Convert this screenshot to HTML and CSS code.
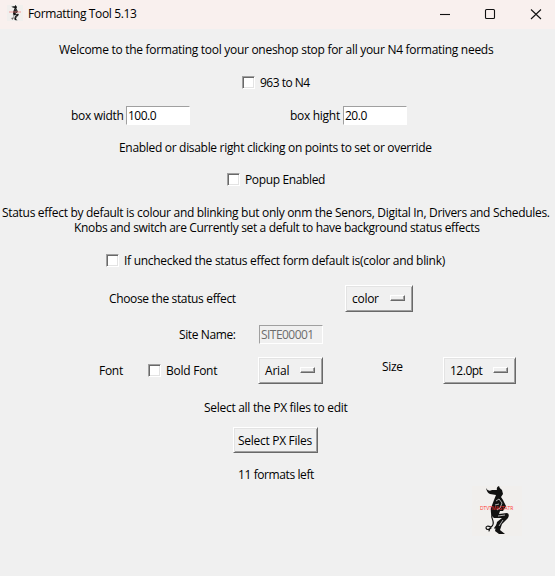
FILE: index.html
```html
<!DOCTYPE html>
<html lang="en">
<head>
<meta charset="utf-8">
<title>Formatting Tool 5.13</title>
<link rel="stylesheet" href="styles.css">
</head>
<body>
<svg class="defs" width="0" height="0" aria-hidden="true">
  <symbol id="imp" viewBox="0 0 50 50">
    <rect width="50" height="50" fill="#f1efed"/>
    <g fill="#111">
      <path d="M14 2Q16 6 20 4L25 4Q24 1 27 0Q27 2 30 4L31 8L29 11L31 14L34 20L31 25L28 25L27 28L35 27Q38 28 36 32L30 38L28 44L33 48H27L23 45L25 36L30 32L22 32Q18 29 19 22L22 14L24 9L18 8Q15 7 14 2Z"/>
    </g>
    <g fill="none" stroke="#111" stroke-linecap="round">
      <path d="M20 27Q19 31 21 35Q22 39 19 41Q14 39 14 42Q15 45 19 42M18 42L17 45" stroke-width="1.2"/>
      <path d="M26 38L23 42" stroke-width="1.6"/>
    </g>
    <path d="M24 15L27 13L30 17L28 22M23 19L27 18M25 24L28 22M26 30L33 29M31 34L27 40" fill="none" stroke="#d8d8d8" stroke-width=".8"/>
  </symbol>
</svg>
<header class="titlebar">
  <svg class="app-icon"><use href="#imp"/><path d="M2 7H14" stroke="#ef7777" stroke-width="1" opacity=".7"/></svg>
  <h1 class="title">Formatting Tool 5.13</h1>
  <svg class="controls" viewBox="0 0 105 28" fill="none" stroke="#111" stroke-width="1.1">
    <path d="M0 13.5H10"/><rect x="45.5" y="8.5" width="9" height="9" rx="1"/><path d="M91 8.5L101 18M101 8.5L91 18"/>
  </svg>
</header>
<main>
  <p class="row welcome"><span>Welcome to the formating tool your oneshop stop for all your N4 formating needs</span></p>
  <label class="row convert"><i class="check"></i><span>963 to N4</span></label>
  <div class="row boxes"><span class="box-w">box width</span><span class="entry entry-w">100.0</span><span class="box-h">box hight</span><span class="entry">20.0</span></div>
  <p class="row enable"><span>Enabled or disable right clicking on points to set or override</span></p>
  <label class="row popup"><i class="check"></i><span>Popup Enabled</span></label>
  <div class="notes"><p class="note-a">Status effect by default is colour and blinking but only onm the Senors, Digital In, Drivers and Schedules.</p><p class="note-b">Knobs and switch are Currently set a defult to have background status effects</p></div>
  <label class="row unchecked"><i class="check"></i><span>If unchecked the status effect form default is(color and blink)</span></label>
  <div class="row effect"><span class="effect-label">Choose the status effect</span><button class="menu color"><span>color</span><i></i></button></div>
  <div class="row site"><span class="site-label">Site Name:</span><span class="entry disabled">SITE00001</span></div>
  <div class="row fonts"><span class="font-label">Font</span><i class="check"></i><span class="bold-label">Bold Font</span><button class="menu arial"><span>Arial</span><i></i></button><span class="size-label">Size</span><button class="menu points"><span>12.0pt</span><i></i></button></div>
  <p class="row files"><span>Select all the PX files to edit</span></p>
  <div class="row action"><button class="select"><span>Select PX Files</span></button></div>
  <p class="row remaining"><span>11 formats left</span></p>
  <div class="brand"><svg class="logo"><use href="#imp"/></svg><span class="logo-text">DTVTMASTATR</span></div>
</main>
</body>
</html>
```
FILE: styles.css
```css
* { box-sizing: border-box; }
body {
  margin: 0;
  width: 555px;
  height: 576px;
  overflow: hidden;
  background: #f0f0f0;
  color: #000;
  font: 12px/15px "Open Sans", "Noto Sans", sans-serif;
  letter-spacing: -.29px;
  white-space: nowrap;
}
p, h1 { margin: 0; }
.defs { position: absolute; }
.titlebar { display: flex; align-items: center; height: 29px; padding-left: 7px; background: #f9f0ee; }
.app-icon { width: 16px; height: 16px; margin-top: -3px; }
.title { width: 160px; margin: -2px 0 0 5px; font-size: 12px; font-weight: 400; letter-spacing: -.35px; }
.controls { width: 105px; height: 28px; margin-left: 252px; }
main { display: flex; flex-direction: column; }
.row { display: flex; align-items: center; flex: none; }
.welcome { height: 41px; padding-left: 59px; }
.convert { height: 25px; padding-left: 242px; letter-spacing: -.5px; }
.boxes { height: 41px; padding-left: 71px; }
.enable { height: 22px; padding-left: 119px; letter-spacing: -.31px; }
.popup { height: 43px; padding-left: 227px; letter-spacing: -.36px; }
.notes { height: 46px; padding-top: 4px; }
.note-a { padding-left: 2px; letter-spacing: -.305px; }
.note-b { padding-left: 74px; letter-spacing: -.345px; }
.unchecked { height: 27px; padding-left: 106px; }
.effect { height: 49px; padding-left: 109px; }
.site { height: 23px; padding-left: 179px; }
.fonts { height: 49px; padding-left: 99px; }
.files { height: 24px; padding-left: 204px; }
.action { height: 42px; padding-left: 233px; }
.remaining { height: 26px; padding-left: 238px; letter-spacing: -.4px; }
.check {
  width: 13px;
  height: 13px;
  margin-right: 5px;
  background: #fff;
  border: 1px solid;
  border-color: #a0a0a0 #fff #fff #a0a0a0;
  box-shadow: inset 1px 1px #696969, inset -1px -1px #e3e3e3;
}
.entry {
  width: 64px;
  height: 19px;
  padding: 1px 0 0 1px;
  background: #fff;
  border: 1px solid;
  border-color: #a0a0a0 #fff #fff #a0a0a0;
}
.boxes .entry { letter-spacing: -.5px; }
.box-w { width: 55px; }
.entry-w { margin-right: 100px; }
.box-h { width: 53px; }
.disabled { background: #f0f0f0; color: #6d6d6d; letter-spacing: -.55px; }
.effect-label { width: 236px; letter-spacing: -.35px; }
.site-label { width: 80px; letter-spacing: -.38px; }
.font-label { width: 49px; }
.bold-label { width: 92px; letter-spacing: -.25px; }
.size-label { width: 61px; margin-top: -9px; }
button {
  display: flex;
  align-items: center;
  height: 27px;
  padding: 0 6px;
  background: #f0f0f0;
  border: 1px solid;
  border-color: #fff #696969 #696969 #fff;
  box-shadow: inset 1px 1px #e3e3e3, inset -1px -1px #a0a0a0;
  color: #000;
  font: inherit;
  letter-spacing: inherit;
}
.menu { justify-content: space-between; padding-right: 7px; }
.menu i {
  width: 15px;
  height: 6px;
  margin-top: -2px;
  border: 1px solid;
  border-color: #fff #696969 #696969 #fff;
  box-shadow: inset -1px -1px #a0a0a0;
}
.color { width: 68px; }
.arial { width: 65px; margin-right: 59px; letter-spacing: -.2px; }
.points { width: 73px; letter-spacing: -.5px; }
.select { width: 85px; height: 26px; padding: 0 4px; }
.brand { position: relative; width: 50px; height: 50px; margin: -1px 0 0 472px; }
.logo { display: block; width: 50px; height: 50px; }
.logo-text { position: absolute; left: 8px; top: 18px; color: #f33; font-size: 5px; line-height: 8px; letter-spacing: -.1px; }
```
